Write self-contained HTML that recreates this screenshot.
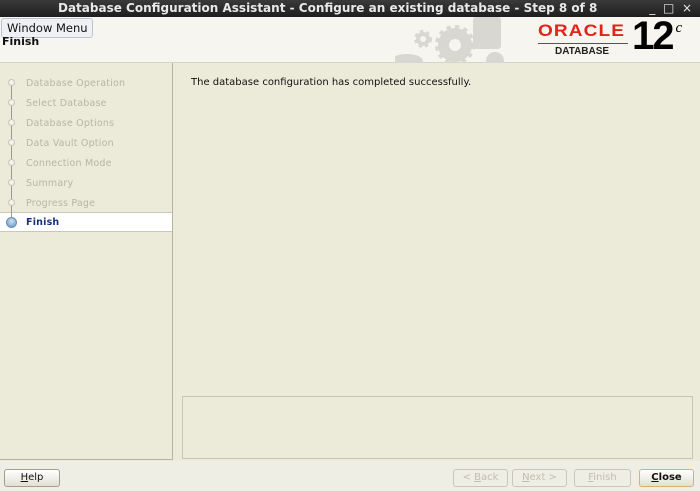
<!DOCTYPE html>
<html><head><style>
*{margin:0;padding:0;box-sizing:border-box}
body{width:700px;height:491px;overflow:hidden;background:#ecead9;font-family:"DejaVu Sans","Liberation Sans",sans-serif;position:relative}
.tb{position:absolute;left:0;top:0;width:700px;height:17px;background:linear-gradient(#3a3a3a,#1e1e1e);color:#e8e8e8;font-size:12px;font-weight:bold;line-height:16px;padding-left:58px}
.hd{position:absolute;left:0;top:17px;width:700px;height:46px;background:#f6f5ef;border-bottom:1px solid #d6d4c4}
.tip{position:absolute;left:1px;top:18px;width:92px;height:20px;background:#eef0f4;border:1px solid #b8c4d6;border-radius:3px;font-size:11.5px;line-height:18px;padding-left:5px;color:#111}
.fin{position:absolute;left:2px;top:35px;font-size:11px;font-weight:bold;color:#111}
.lp{position:absolute;left:0;top:63px;width:173px;height:397px;border-right:1px solid #b5b3a4;border-bottom:1px solid #b5b3a4}
.it{position:absolute;left:26px;font-size:9.5px;color:#b7b5a6;letter-spacing:.2px}
.dot{position:absolute;left:8px;width:7px;height:7px;border-radius:50%;border:1px solid #c8c6b8;background:#f4f3ec}
.line{position:absolute;left:11px;top:85px;width:1px;height:137px;background:#9d9b8e}
.sel{position:absolute;left:0;top:212px;width:172px;height:20px;background:#fff;border-top:1px solid #c9c7b9;border-bottom:1px solid #c9c7b9}
.box{position:absolute;left:182px;top:396px;width:511px;height:63px;border:1px solid #c6c4b5}
.btn{position:absolute;top:469px;height:18px;border:1px solid #c9c7b8;border-radius:3px;font-size:10px;text-align:center;line-height:16px;color:#c0beaf;background:#efeee4}
.on{border-color:#a09e90;color:#111;background:linear-gradient(#fff,#e2e0d2)}
</style></head><body>
<div class="tb">Database Configuration Assistant - Configure an existing database - Step 8 of 8<span style="position:absolute;right:8px;font-weight:normal">_&nbsp;&nbsp;□&nbsp;&nbsp;×</span></div>
<div class="hd">
<svg style="position:absolute;left:395px;top:0" width="140" height="46"><g fill="#d8d7d2"><circle cx="60" cy="28" r="17" stroke="#d8d7d2" stroke-width="6" stroke-dasharray="4 4"/><circle cx="60" cy="28" r="15"/><circle cx="28" cy="22" r="7" stroke="#d8d7d2" stroke-width="4" stroke-dasharray="3 3"/><rect x="78" y="0" width="28" height="32" rx="3"/><ellipse cx="12" cy="44" rx="16" ry="7"/><circle cx="100" cy="44" r="9"/></g><circle cx="60" cy="28" r="6" fill="#f6f5ef"/><circle cx="28" cy="22" r="3" fill="#f6f5ef"/></svg>
<div style="position:absolute;left:538px;top:4px;font:bold 17px 'Liberation Sans',sans-serif;color:#e2231a;letter-spacing:1px;transform:scaleX(1.12);transform-origin:left">ORACLE</div>
<div style="position:absolute;left:538px;top:26px;width:90px;height:1px;background:#555"></div>
<div style="position:absolute;left:555px;top:29px;font:bold 10px 'Liberation Sans',sans-serif;color:#222">DATABASE</div>
<div style="position:absolute;left:632px;top:-3px;font:bold 40px 'Liberation Sans',sans-serif;color:#000;letter-spacing:-2px">12<span style="font:italic 15px 'Liberation Serif',serif;vertical-align:top;position:relative;top:6px;left:3px">c</span></div>
</div>
<div class="tip">Window Menu</div>
<div class="fin">Finish</div>
<div class="lp"></div>
<div class="sel"></div>
<div class="line"></div>
<div class="dot" style="top:79px"></div><div class="it" style="top:78px">Database Operation</div>
<div class="dot" style="top:99px"></div><div class="it" style="top:98px">Select Database</div>
<div class="dot" style="top:119px"></div><div class="it" style="top:118px">Database Options</div>
<div class="dot" style="top:139px"></div><div class="it" style="top:138px">Data Vault Option</div>
<div class="dot" style="top:159px"></div><div class="it" style="top:158px">Connection Mode</div>
<div class="dot" style="top:179px"></div><div class="it" style="top:178px">Summary</div>
<div class="dot" style="top:199px"></div><div class="it" style="top:198px">Progress Page</div>
<div style="position:absolute;left:6px;top:217px;width:11px;height:11px;border-radius:50%;background:radial-gradient(circle at 50% 35%,#cfe3f5,#5b8fc5);border:1px solid #6d8fb3"></div>
<div class="it" style="top:217px;color:#1a2f7a;font-weight:bold">Finish</div>
<div style="position:absolute;left:191px;top:77px;font-size:10px;color:#111">The database configuration has completed successfully.</div>
<div class="box"></div>
<div style="position:absolute;left:0;top:461px;width:700px;height:30px;background:#efeee5"></div>
<div class="btn on" style="left:4px;width:56px"><u>H</u>elp</div>
<div class="btn" style="left:453px;width:55px">&lt; <u>B</u>ack</div>
<div class="btn" style="left:512px;width:55px"><u>N</u>ext &gt;</div>
<div class="btn" style="left:574px;width:57px"><u>F</u>inish</div>
<div class="btn on" style="left:639px;width:55px;border-color:#d8b070;font-weight:bold"><u>C</u>lose</div>
</body></html>
